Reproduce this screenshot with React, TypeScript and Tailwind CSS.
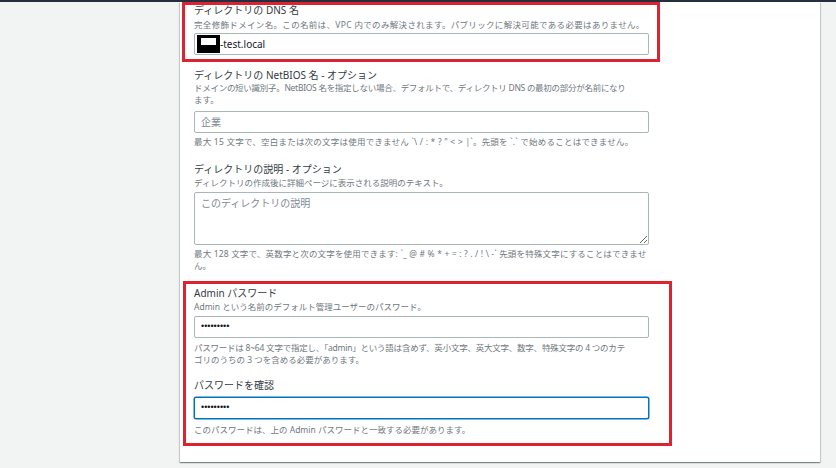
const labelCls = "text-[10px] leading-[14px] text-[#333b44] whitespace-nowrap";
const descCls = "text-[8.5px] leading-[12px] text-[#6f7880] whitespace-nowrap";
const boxCls =
  "w-[455px] h-[22px] border border-[#aab7b8] rounded-[2px] bg-white text-[10px] text-[#16191f] px-[6px] outline-none";

const Dots = () => (
  <span className="font-['Liberation_Sans',sans-serif] text-[9px] text-[#16191f]">•••••••••</span>
);

export default function App() {
  return (
    <div className="relative w-[836px] h-[468px] overflow-hidden bg-[#f2f3f3] font-['Noto_Sans','Noto_Sans_CJK_JP',sans-serif]">
      <div className="h-[2px] bg-[#232f3e]" />

      <div className="ml-[180px] w-[640px] bg-white pl-[14px] pt-px pb-[26px] shadow-[0_1px_1px_0_rgba(0,28,36,0.3),1px_1px_1px_0_rgba(0,28,36,0.15),-1px_1px_1px_0_rgba(0,28,36,0.15)]">
        {/* DNS name */}
        <div className={labelCls}>ディレクトリの DNS 名</div>
        <div className={`${descCls} mt-[2px] tracking-[0.33px]`}>
          完全修飾ドメイン名。この名前は、VPC 内でのみ解決されます。パブリックに解決可能である必要はありません。
        </div>
        <div className={`${boxCls} mt-[2px] flex items-center !px-[2px]`}>
          <div className="w-[23px] h-[18px] bg-black pt-[3px] pl-[4px]">
            <div className="w-[15px] h-[7px] bg-white" />
          </div>
          <span className="leading-none">-test.local</span>
        </div>

        {/* NetBIOS */}
        <div className={`${labelCls} mt-[13px]`}>ディレクトリの NetBIOS 名 - オプション</div>
        <div className={descCls}>
          <span className="tracking-[-0.28px]">
            ドメインの短い識別子。NetBIOS 名を指定しない場合、デフォルトで、ディレクトリ DNS の最初の部分が名前になり
          </span>
          <br />
          ます。
        </div>
        <input
          readOnly
          placeholder="企業"
          className={`${boxCls} mt-[5px] block placeholder:text-[#7f8a93]`}
        />
        <div className={`${descCls} mt-[3px] tracking-[0.22px]`}>
          最大 15 文字で、空白または次の文字は使用できません `\ / : * ? " &lt; &gt; |`。先頭を `.` で始めることはできません。
        </div>

        {/* Description */}
        <div className={`${labelCls} mt-[14px]`}>ディレクトリの説明 - オプション</div>
        <div className={`${descCls} mt-px`}>ディレクトリの作成後に詳細ページに表示される説明のテキスト。</div>
        <textarea
          readOnly
          placeholder="このディレクトリの説明"
          className="mt-[3px] block w-[455px] h-[53px] border border-[#aab7b8] rounded-[2px] bg-white text-[10px] leading-[14px] px-[6px] pt-[3px] outline-none placeholder:text-[#7f8a93]"
        />
        <div className={`${descCls} mt-[3px]`}>
          <span className="tracking-[0.17px]">
            最大 128 文字で、英数字と次の文字を使用できます: `_ @ # % * + = : ? . / ! \ -` 先頭を特殊文字にすることはできませ
          </span>
          <br />
          ん。
        </div>

        {/* Admin password */}
        <div className={`${labelCls} mt-[14px]`}>Admin パスワード</div>
        <div className={`${descCls} mt-px`}>Admin という名前のデフォルト管理ユーザーのパスワード。</div>
        <div className={`${boxCls} mt-[3px] flex items-center`}>
          <Dots />
        </div>
        <div className={`${descCls} mt-[4px]`}>
          <span className="tracking-[-0.23px]">
            パスワードは 8~64 文字で指定し、「admin」という語は含めず、英小文字、英大文字、数字、特殊文字の 4 つのカテ
          </span>
          <br />
          ゴリのうちの 3 つを含める必要があります。
        </div>

        {/* Confirm password */}
        <div className={`${labelCls} mt-[12px]`}>パスワードを確認</div>
        <div className={`${boxCls} mt-[5px] flex items-center !border-[#0073bb] shadow-[0_0_0_0.5px_#0073bb]`}>
          <Dots />
        </div>
        <div className={`${descCls} mt-[5px]`}>このパスワードは、上の Admin パスワードと一致する必要があります。</div>
      </div>

      {/* red annotation frames */}
      <div className="absolute left-[182px] top-[2px] w-[478px] h-[60px] border-[3px] border-[#dc2430] pointer-events-none" />
      <div className="absolute left-[183px] top-[281px] w-[489px] h-[165px] border-[3px] border-[#dc2430] pointer-events-none" />
    </div>
  );
}
